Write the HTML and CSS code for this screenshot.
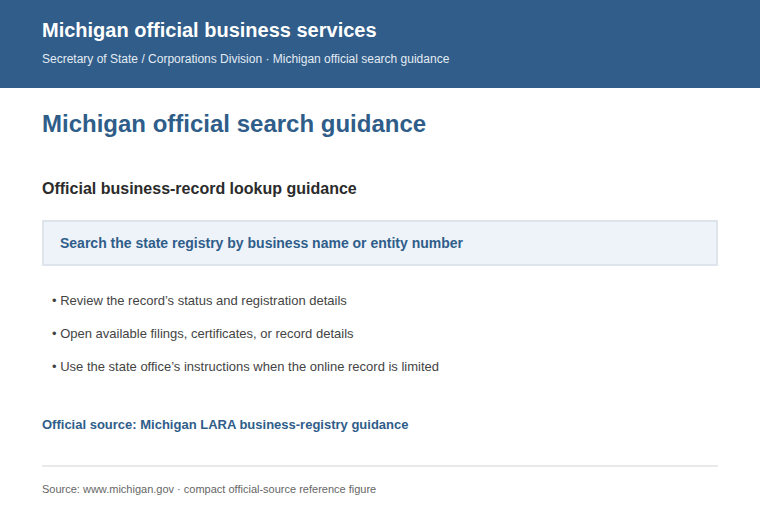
FILE: index.html
```html
<!DOCTYPE html>
<html lang="en">

<head>
    <meta charset="UTF-8">
    <title>Michigan official search guidance</title>
    <link rel="stylesheet" href="styles.css">
</head>

<body>
    <header class="masthead">
        <div class="masthead-title">Michigan official business services</div>
        <div class="masthead-crumbs">Secretary of State / Corporations Division · Michigan official search guidance</div>
    </header>
    <main class="page">
        <h1 class="page-title">Michigan official search guidance</h1>
        <h2 class="section-title">Official business-record lookup guidance</h2>
        <div class="callout">Search the state registry by business name or entity number</div>
        <ul class="steps">
            <li>Review the record’s status and registration details</li>
            <li>Open available filings, certificates, or record details</li>
            <li>Use the state office’s instructions when the online record is limited</li>
        </ul>
        <p class="source-link">Official source: Michigan LARA business-registry guidance</p>
        <footer class="figure-note">Source: www.michigan.gov · compact official-source reference figure</footer>
    </main>
</body>

</html>
```

FILE: styles.css
```css
* {
    box-sizing: border-box;
}

body {
    margin: 0;
    background: #fff;
    font-family: "Liberation Sans", Arial, sans-serif;
    color: #333;
}

.masthead {
    background: #305d89;
    color: #fff;
    height: 88px;
    padding: 18px 42px 0;
}

.masthead-title {
    font-size: 20px;
    font-weight: bold;
    line-height: 24px;
}

.masthead-crumbs {
    margin-top: 10px;
    font-size: 12px;
    line-height: 14px;
    color: #e3ebf3;
}

.page {
    padding: 0 42px;
}

.page-title {
    margin: 21px 0 0;
    font-size: 24px;
    line-height: 30px;
    color: #2f5d8a;
}

.section-title {
    margin: 40px 0 0;
    font-size: 16px;
    line-height: 20px;
    color: #2b2b2b;
}

.callout {
    margin-top: 21px;
    height: 46px;
    padding: 0 16px;
    display: flex;
    align-items: center;
    background: #eef3f9;
    border: 2px solid #dde4eb;
    font-size: 14px;
    font-weight: bold;
    color: #2f5d8a;
}

.steps {
    list-style: none;
    margin: 27px 0 0;
    padding: 0 0 0 10px;
}

.steps li {
    font-size: 13px;
    line-height: 16px;
    color: #444;
    margin-bottom: 17px;
}

.steps li::before {
    content: "• ";
}

.source-link {
    margin: 42px 0 0;
    font-size: 13px;
    font-weight: bold;
    line-height: 16px;
    color: #2f5d8a;
}

.figure-note {
    margin-top: 32px;
    border-top: 2px solid #e7e9eb;
    padding-top: 15px;
    font-size: 11px;
    line-height: 14px;
    color: #666;
}
```
